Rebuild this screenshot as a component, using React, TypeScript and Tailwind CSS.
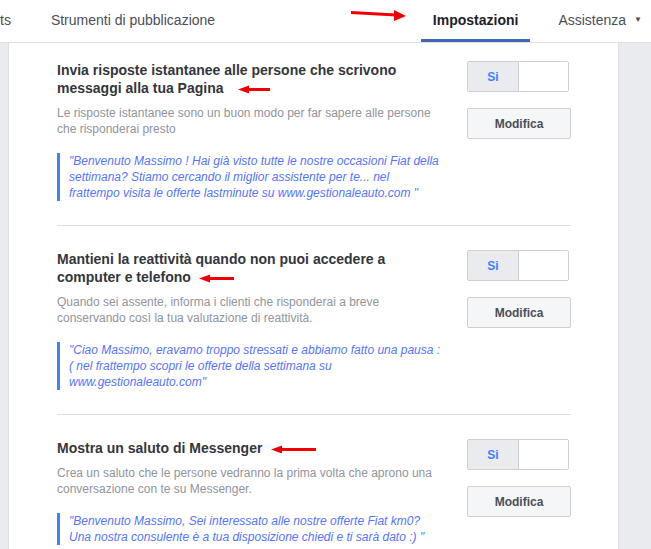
const sections = [
  {
    title: "Invia risposte istantanee alle persone che scrivono messaggi alla tua Pagina",
    arrow: { gap: "ml-[14px]", w: 32 },
    desc: "Le risposte istantanee sono un buon modo per far sapere alle persone che risponderai presto",
    quote:
      "\"Benvenuto Massimo ! Hai già visto tutte le nostre occasioni Fiat della settimana? Stiamo cercando il miglior assistente per te... nel frattempo visita le offerte lastminute su www.gestionaleauto.com \"",
  },
  {
    title: "Mantieni la reattività quando non puoi accedere a computer e telefono",
    arrow: { gap: "ml-[8px]", w: 35 },
    desc: "Quando sei assente, informa i clienti che risponderai a breve conservando così la tua valutazione di reattività.",
    quote:
      "\"Ciao Massimo, eravamo troppo stressati e abbiamo fatto una pausa : ( nel frattempo scopri le offerte della settimana su www.gestionaleauto.com\"",
  },
  {
    title: "Mostra un saluto di Messenger",
    arrow: { gap: "ml-[9px]", w: 45 },
    desc: "Crea un saluto che le persone vedranno la prima volta che aprono una conversazione con te su Messenger.",
    quote:
      "\"Benvenuto Massimo, Sei interessato alle nostre offerte Fiat km0? Una nostra consulente è a tua disposizione chiedi e ti sarà dato :) \"",
  },
];

function LeftArrow({ w }: { w: number }) {
  return (
    <svg width={w} height="9" viewBox={`0 0 ${w} 9`} className="inline-block align-middle">
      <rect x="8" y="3" width={w - 8} height="3" fill="#f00000" />
      <polygon points="0,4.5 11,0.5 11,8.5" fill="#f00000" />
    </svg>
  );
}

export default function App() {
  return (
    <div className="w-[651px] h-[549px] overflow-hidden bg-[#e9ebee] font-['Liberation_Sans',Arial,sans-serif]">
      <div className="relative flex h-[43px] items-stretch border-b border-[#dddfe2] bg-white text-[14px] text-[#4b4f56]">
        <span className="flex items-center pb-[2px]">ts</span>
        <span className="ml-[40px] flex items-center pb-[2px]">Strumenti di pubblicazione</span>
        <div className="ml-auto flex items-center border-b-[3px] border-[#4267b2] px-[12px] pt-[1px] font-bold text-[#1d2129]">
          Impostazioni
        </div>
        <span className="ml-[28px] flex items-center pb-[2px]">Assistenza</span>
        <span className="ml-[8px] mr-[9px] flex items-center pb-[2px] text-[8px]">▼</span>
        <svg className="absolute left-[350px] top-[7px]" width="58" height="14" viewBox="0 0 58 14">
          <polygon points="1,4 46,6.5 46,9.5 1,7" fill="#f00000" />
          <polygon points="56,9 44,3 44,14" fill="#f00000" />
        </svg>
      </div>

      <div className="flex pl-[8px]">
        <div className="w-[611px] border-x border-[#dddfe2] bg-white pl-[48px] pr-[47px] pt-[18px]">
          {sections.map((s, i) => (
            <div key={i} className={i > 0 ? "border-t border-[#dddfe2] pt-[24px]" : ""}>
              <div className="flex justify-between pb-[24px]">
                <div className="w-[386px]">
                  <h3 className="text-[14px] font-bold leading-[18px] text-[#33363c]">
                    {s.title}
                    <span className={`${s.arrow.gap} inline-block`}>
                      <LeftArrow w={s.arrow.w} />
                    </span>
                  </h3>
                  <p className="mt-[8px] text-[12px] leading-[16px] text-[#90949c]">{s.desc}</p>
                  <blockquote className="mt-[16px] border-l-[3px] border-[#4080ff] pl-[9px] text-[12px] italic leading-[16px] text-[#5574ff]">
                    {s.quote}
                  </blockquote>
                </div>
                <div className="flex w-[104px] flex-col gap-[16px]">
                  <div className="flex h-[31px] w-[102px] overflow-hidden rounded-[2px] border border-[#ccd0d5]">
                    <div className="flex w-[51px] items-center justify-center border-r border-[#ccd0d5] bg-[#e9ebee] text-[12px] font-bold text-[#4080ff]">
                      Si
                    </div>
                    <div className="flex-1 bg-white" />
                  </div>
                  <button className="h-[31px] w-[104px] rounded-[2px] border border-[#ccd0d5] bg-[#f5f6f7] text-[12px] font-bold text-[#4b4f56]">
                    Modifica
                  </button>
                </div>
              </div>
            </div>
          ))}
        </div>
      </div>
    </div>
  );
}
